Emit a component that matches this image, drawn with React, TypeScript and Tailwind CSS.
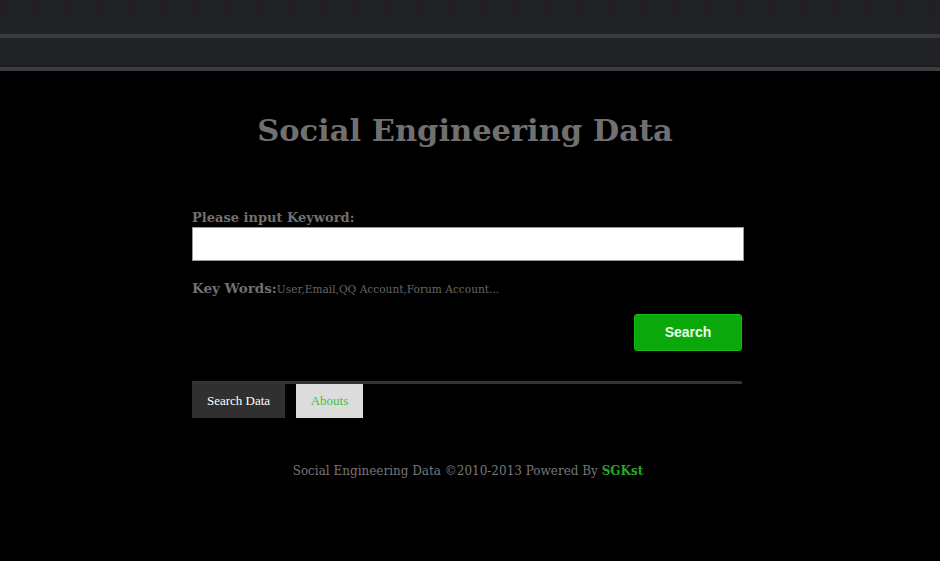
const App = () => {
  return (
    <div className="min-h-[561px] bg-black font-['DejaVu_Serif',serif] text-[#777]">
      {/* top bar */}
      <div className="bg-[#212226]">
        <div className="h-[16px] bg-[repeating-linear-gradient(90deg,#211f24_0px,#211f24_8px,#1f2326_8px,#1f2326_32px)]" />
        <div className="h-[18px]" />
        <div className="h-[4px] bg-[#3a3b3e]" />
        <div className="h-[27px]" />
        <div className="h-[2px] bg-[#1c1d20]" />
        <div className="h-[4px] bg-[#3b3c3f]" />
      </div>

      <div className="mx-auto w-[556px] pr-[4px] pt-[37px]">
        <h1 className="pr-[6px] text-center text-[30.5px] font-bold leading-[44px] text-[#707070]">
          Social Engineering Data
        </h1>

        <div className="mt-[57px]">
          <label className="block text-[13px] font-bold leading-[18px] text-[#707070]">
            Please input Keyword:
          </label>
          <input
            type="text"
            className="block h-[34px] w-full border border-[#999] bg-white outline-none"
          />
          <p className="mt-[17px] leading-[20px]">
            <span className="text-[13.5px] font-bold text-[#707070]">Key Words:</span>
            <span className="text-[10.6px] text-[#666]">
              User,Email,QQ Account,Forum Account...
            </span>
          </p>
        </div>

        <div className="mt-[15px] flex justify-end pr-[2px]">
          <button className="h-[37px] w-[108px] rounded-[3px] border border-[#15b815] bg-[#0aa80a] font-['Liberation_Sans',sans-serif] text-[14px] font-bold text-[#e8ffe8]">
            Search
          </button>
        </div>

        <div className="mt-[30px] mr-[2px] h-[3px] bg-[#333]" />
        <div className="flex gap-[11px] font-['Liberation_Serif',serif]">
          <div className="flex h-[34px] w-[93px] items-center justify-center bg-[#303030] text-[13px] text-white">
            Search Data
          </div>
          <div className="flex h-[34px] w-[67px] items-center justify-center bg-[#dcdcdc] text-[13px] text-[#3fc33f]">
            Abouts
          </div>
        </div>

        <p className="mt-[44px] text-center text-[12px] text-[#777]">
          Social Engineering Data ©2010-2013 Powered By{" "}
          <span className="font-bold text-[#2aa52a]">SGKst</span>
        </p>
      </div>
    </div>
  );
};

export default App;
